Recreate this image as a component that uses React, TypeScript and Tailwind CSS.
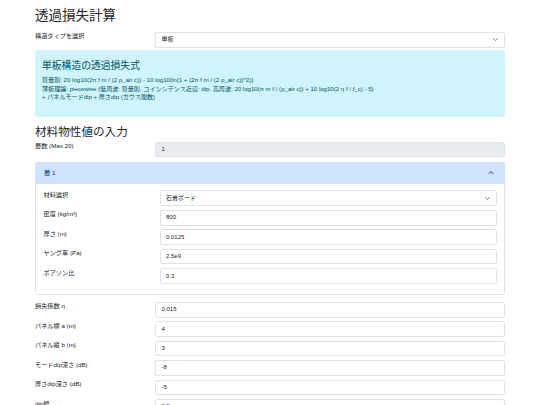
import React from "react";

const font = { fontFamily: '"Liberation Sans", "Noto Sans CJK JP", sans-serif' };

function Chevron({ up = false, color = "#495057", w = 5, h = 3 }: { up?: boolean; color?: string; w?: number; h?: number }) {
  return (
    <svg width={w} height={h} viewBox="0 0 10 6" fill="none" className="shrink-0">
      {up ? (
        <path d="M1 5 L5 1 L9 5" stroke={color} strokeWidth="1.4" strokeLinecap="round" strokeLinejoin="round" />
      ) : (
        <path d="M1 1 L5 5 L9 1" stroke={color} strokeWidth="1.4" strokeLinecap="round" strokeLinejoin="round" />
      )}
    </svg>
  );
}

function Field({ value, select = false, disabled = false }: { value: string; select?: boolean; disabled?: boolean }) {
  return (
    <div
      className={`h-[15.7px] rounded-[2.3px] border border-[#dee2e6] flex items-center justify-between pl-[5.5px] pr-[6px] text-[6px] text-[#212529] ${
        disabled ? "bg-[#e9ecef]" : "bg-white"
      }`}
    >
      <span>{value}</span>
      {select && <Chevron />}
    </div>
  );
}

function Row({ label, value, select = false, disabled = false, cols = "main", mb = "mb-[3.75px]" }: { label: string; value: string; select?: boolean; disabled?: boolean; cols?: "main" | "sub"; mb?: string }) {
  return (
    <div className={`grid ${cols === "main" ? "grid-cols-[120px_1fr]" : "grid-cols-[116px_1fr]"} ${mb}`}>
      <div className="text-[6.2px] leading-[9px] text-[#212529] mt-[-0.5px]">{label}</div>
      <Field value={value} select={select} disabled={disabled} />
    </div>
  );
}

export default function App() {
  return (
    <div className="bg-white w-[540px] min-h-[405px]" style={font}>
      <div className="mx-[35px] pt-[8.4px]">
        <h1 className="text-[13.5px] leading-[16.2px] text-[#212529] mb-[7.4px]">透過損失計算</h1>
        <Row label="構造タイプを選択" value="単板" select mb="mb-[2.3px]" />
        <div className="bg-[#cff4fc] rounded-[2.3px] h-[67px] px-[7px] pt-[10px]">
          <h2 className="text-[9.8px] leading-[11.6px] text-[#055160] mb-[4.8px]">単板構造の透過損失式</h2>
          <div className="text-[6.08px] leading-[8.5px] text-[#055160]">
            <div>質量則: 20 log10(2π f m / (2 ρ_air c)) - 10 log10(ln(1 + (2π f m / (2 ρ_air c))^2))</div>
            <div>薄板理論: piecewise (低周波: 質量則, コインシデンス近辺: dip, 高周波: 20 log10(π m f / (ρ_air c)) + 10 log10(2 η f / f_c) - 5)</div>
            <div>+ パネルモードdip + 厚さdip (ガウス関数)</div>
          </div>
        </div>
        <h2 className="text-[11.6px] leading-[14px] text-[#212529] mt-[8px] mb-[2.7px]">材料物性値の入力</h2>
        <Row label="層数 (Max 20)" value="1" disabled mb="mb-[4.3px]" />
        <div className="border border-[#dee2e6] rounded-[2.3px] mb-[6.7px]">
          <div className="h-[22.3px] mt-[-1px] mx-[-1px] bg-[#cfe2ff] rounded-t-[2.3px] border-b border-[#dee2e6] flex items-center justify-between pl-[9px] pr-[11px] text-[6.2px] text-[#052c65]">
            <span>層 1</span>
            <Chevron up color="#052c65" w={6} h={3.5} />
          </div>
          <div className="px-[7.5px] pt-[6.5px] pb-[6.5px]">
            <Row cols="sub" label="材料選択" value="石膏ボード" select />
            <Row cols="sub" label="密度 (kg/m²)" value="800" />
            <Row cols="sub" label="厚さ (m)" value="0.0125" />
            <Row cols="sub" label="ヤング率 (Pa)" value="2.5e9" />
            <Row cols="sub" label="ポアソン比" value="0.3" />
          </div>
        </div>
        <Row label="損失係数 η" value="0.015" />
        <Row label="パネル横 a (m)" value="4" />
        <Row label="パネル縦 b (m)" value="3" />
        <Row label="モードdip深さ (dB)" value="-8" />
        <Row label="厚さdip深さ (dB)" value="-5" />
        <Row label="dip幅" value="0.5" />
      </div>
    </div>
  );
}
